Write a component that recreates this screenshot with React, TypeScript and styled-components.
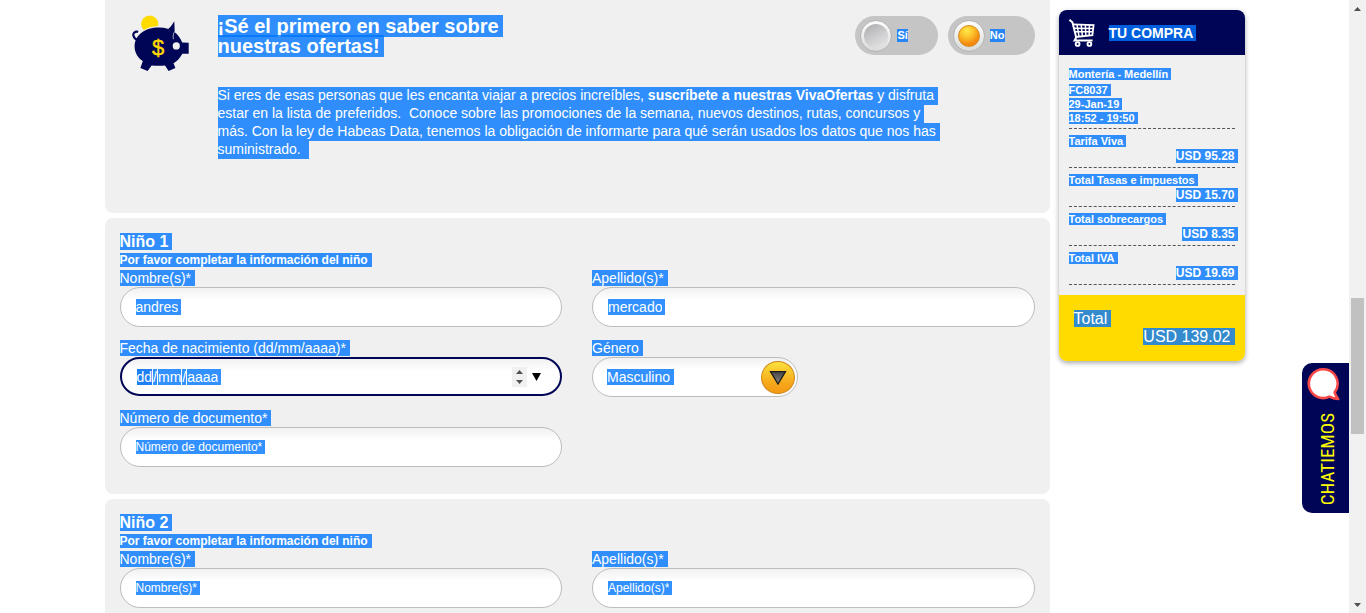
import React from "react";
import styled, { createGlobalStyle, css } from "styled-components";

const navy = "#000555";
const yellow = "#ffdb00";
const mark = "rgba(0, 118, 255, 0.8)";

const GlobalStyle = createGlobalStyle`
  *, *::before, *::after { box-sizing: border-box; }
  body {
    margin: 0;
    background: #fff;
    font-family: "Liberation Sans", Arial, sans-serif;
    font-size: 14px;
    color: #fff;
  }
  h1, h2, p { margin: 0; }
  input, select, button { font-family: inherit; margin: 0; padding: 0; border: 0; border-radius: 0; outline: 0; }
`;

const Shell = styled.div`
  display: flex;
  height: 100vh;
  overflow: hidden;
`;

const Viewport = styled.div`
  position: relative;
  flex: 1;
  min-width: 0;
`;

const Container = styled.div`
  display: grid;
  grid-template-columns: minmax(0, 1fr) 186px;
  align-items: start;
  gap: 9px;
  width: 100%;
  max-width: 1140px;
  margin: 0 auto;
`;

const Column = styled.main`
  display: flex;
  flex-direction: column;
  gap: 5px;
`;

const Card = styled.section`
  display: flex;
  flex-direction: column;
  align-items: stretch;
  padding: 15px 15px 27px;
  border-radius: 8px;
  background: #f0f0f0;
`;

/* Newsletter */

const OfferCard = styled.section`
  display: grid;
  grid-template-columns: 86px minmax(0, 1fr);
  padding: 15px 15px 55px 27px;
  border-radius: 0 0 8px 8px;
  background: #f0f0f0;
`;

const OfferHead = styled.div`
  display: flex;
  justify-content: space-between;
  align-items: flex-start;
  padding-top: 1px;
  margin-bottom: 30px;
`;

const OfferTitle = styled.h1`
  max-width: 320px;
  font-size: 20px;
  line-height: 20px;
`;

const OfferText = styled.p`
  max-width: 728px;
  font-size: 14px;
  line-height: 18px;
`;

const Marked = styled.span<{ $fill?: boolean }>`
  padding: 0 4px ${(p) => (p.$fill ? "2px" : "0")} 0;
  background: ${mark};
  -webkit-box-decoration-break: clone;
  box-decoration-break: clone;
`;

const Options = styled.div`
  display: flex;
  gap: 10px;
`;

const Option = styled.label`
  display: flex;
  align-items: center;
  gap: 5px;
  height: 39px;
  padding: 0 30px 0 5px;
  border-radius: 20px;
  background: #c5c5c5;
  font-size: 11px;
  font-weight: bold;
  line-height: 13px;
`;

const Radio = styled.input`
  appearance: none;
  display: grid;
  place-items: center;
  width: 32px;
  height: 32px;
  border: 1px solid #b4b4b4;
  border-radius: 50%;
  background: linear-gradient(#fdfdfd, #d9dbdb);
  &::before {
    content: "";
    width: 24px;
    height: 24px;
    border-radius: 50%;
    background: linear-gradient(150deg, #b2b2b4 10%, #cfcfd1 55%, #e8e8e8);
  }
  &:checked::before {
    width: 22px;
    height: 22px;
    border: 1px solid #d98a1c;
    background: radial-gradient(circle at 40% 25%, #ffe94a 0, #fbc02a 35%, #f58a10 68%, #f07c0c 100%);
  }
`;

const OptionText = styled.span`
  background: ${mark};
`;

/* Passenger form */

const line = css`
  align-self: flex-start;
  padding-right: 4px;
  background: ${mark};
`;

const CardTitle = styled.h2`
  ${line}
  margin-bottom: 3px;
  font-size: 16px;
  line-height: 17px;
`;

const CardNote = styled.p`
  ${line}
  margin-bottom: 3px;
  font-size: 12px;
  font-weight: bold;
  line-height: 14px;
`;

const Fields = styled.div`
  display: grid;
  grid-template-columns: 1fr 1fr;
  gap: 13px 30px;
`;

const Field = styled.div`
  display: flex;
  flex-direction: column;
  gap: 1px;
`;

const Label = styled.label`
  ${line}
  line-height: 16px;
`;

const Box = styled.div<{ $active?: boolean; $compact?: boolean }>`
  display: flex;
  align-items: center;
  width: ${(p) => (p.$compact ? "206px" : "auto")};
  height: ${(p) => (p.$active ? "39px" : "40px")};
  padding: ${(p) => (p.$compact ? "0 2px 0 14px" : p.$active ? "0 19px 0 15px" : "0 15px")};
  border: ${(p) => (p.$active ? `2px solid ${navy}` : "1px solid #bdbdbd")};
  border-radius: 20px;
  background: linear-gradient(#f1f1f1, #fff 12px);
`;

const markedControl = css`
  appearance: none;
  field-sizing: content;
  flex: none;
  color: #fff;
  background: ${mark};
`;

const TextInput = styled.input`
  ${markedControl}
  height: 16px;
  padding-right: 3px;
  font-size: 14px;
  line-height: 16px;
  &::placeholder {
    color: #fff;
    opacity: 1;
  }
  &:placeholder-shown {
    height: 14px;
    font-size: 12px;
    line-height: 14px;
  }
`;

const DateParts = styled.div`
  display: flex;
  flex: 1;
  gap: 1px;
  line-height: 16px;
`;

const DatePart = styled.input<{ $current?: boolean; $last?: boolean }>`
  ${markedControl}
  height: 16px;
  padding-right: ${(p) => (p.$last ? "3px" : "0")};
  background: ${(p) => (p.$current ? "#1f80f5" : mark)};
  font-size: 14px;
`;

const Slash = styled.span`
  background: ${mark};
`;

const Spinner = styled.div`
  display: grid;
  margin-right: 5px;
  background: #f0f0f0;
`;

const StepButton = styled.button`
  display: grid;
  place-items: center;
  width: 15px;
  height: 10px;
  background: none;
  color: #505050;
`;

const CalendarButton = styled.button`
  display: grid;
  width: 9px;
  height: 8px;
  background: none;
  color: #000;
`;

const Select = styled.select`
  ${markedControl}
  height: 16px;
  padding-right: 4px;
  font-size: 14px;
  line-height: 16px;
`;

const DropButton = styled.button`
  display: grid;
  place-items: center;
  width: 34px;
  height: 33px;
  margin-left: auto;
  border: 1px solid #cf8417;
  border-radius: 50%;
  background: linear-gradient(#fbe23c, #f6a51a 70%, #f39a14);
`;

/* Purchase summary */

const Summary = styled.aside`
  margin-top: 10px;
  border-radius: 8px;
  overflow: hidden;
  background: #f0f0f0;
  box-shadow: 0 2px 5px rgba(0, 0, 0, 0.35);
`;

const SummaryHead = styled.header`
  display: flex;
  align-items: center;
  gap: 14px;
  height: 45px;
  padding: 0 10px;
  background: ${navy};
`;

const SummaryTitle = styled.h2`
  padding-right: 3px;
  background: ${mark};
  font-size: 14px;
  line-height: 16px;
`;

const SummaryBody = styled.div`
  padding: 13px 10px 4px;
  font-size: 11px;
  font-weight: bold;
  line-height: 12px;
`;

const Block = styled.div`
  display: flex;
  flex-direction: column;
  gap: 2px;
  padding-bottom: 4px;
  margin-bottom: 6px;
  border-bottom: 1px dashed #555;
`;

const Item = styled.span<{ $lead?: boolean }>`
  ${line}
  padding-right: 3px;
  margin-bottom: ${(p) => (p.$lead ? "2px" : "0")};
`;

const Amount = styled.span`
  align-self: flex-end;
  margin-right: -3px;
  padding-right: 3px;
  background: ${mark};
  font-size: 12px;
  line-height: 14px;
`;

const Total = styled.footer`
  display: flex;
  flex-direction: column;
  gap: 1px;
  padding: 15px 10px 16px 15px;
  background: ${yellow};
  font-size: 16px;
  line-height: 17px;
`;

const TotalText = styled.span<{ $end?: boolean }>`
  align-self: ${(p) => (p.$end ? "flex-end" : "flex-start")};
  padding-right: 4px;
  background: ${mark};
`;

/* Chat tab and scroll bar */

const ChatTab = styled.button`
  position: absolute;
  top: 363px;
  right: 0;
  display: flex;
  flex-direction: column;
  align-items: center;
  justify-content: space-between;
  width: 47px;
  height: 150px;
  padding: 4px 0 8px 5px;
  border-radius: 10px 0 0 10px;
  background: ${navy};
  & > svg {
    align-self: flex-start;
  }
`;

const ChatText = styled.span`
  writing-mode: vertical-rl;
  rotate: 180deg;
  color: #ff0;
  font-family: "Roboto Condensed", "Liberation Sans Narrow", "Liberation Sans", sans-serif;
  font-size: 19px;
  line-height: 26px;
`;

const ScrollBar = styled.div`
  display: flex;
  flex-direction: column;
  flex: none;
  width: 17px;
  padding: 0 2px;
  background: #f1f1f1;
  color: #505050;
`;

const ScrollEnd = styled.div`
  display: grid;
  place-items: center;
  height: 17px;
`;

const Track = styled.div<{ $part: number; $thumb?: boolean }>`
  flex: ${(p) => p.$part};
  background: ${(p) => (p.$thumb ? "#c1c1c1" : "none")};
`;

function Triangle({ up, width, height }: { up?: boolean; width: number; height: number }) {
  const d = up ? `M0 ${height}H${width}L${width / 2} 0Z` : `M0 0H${width}L${width / 2} ${height}Z`;
  return (
    <svg width={width} height={height} aria-hidden="true">
      <path d={d} fill="currentColor" />
    </svg>
  );
}

function PiggyBank() {
  return (
    <svg width="57" height="56" viewBox="0 0 57 56" aria-hidden="true">
      <circle cx="17.7" cy="9" r="8.6" fill={yellow} />
      <ellipse cx="27" cy="31.4" rx="25.6" ry="20.4" fill="#f0f0f0" />
      <g fill={navy}>
        <path d="M27 12.4C40 12.4 47 19 50.2 27.6L56.7 27.8V38.8H50.4C47.6 43.6 44.6 46.6 41.5 48.2L43.4 53L36.6 56L33 50.4C29 51 24 51 19.6 50.4L15.6 56L8.4 53L10.8 46C5.6 42.4 2.6 37.4 2.6 31.4C2.6 20 13 12.4 27 12.4Z" />
        <path d="M34 15.5C37.6 13.4 39.8 10.8 42.2 6.2C42.8 11 42.2 14.6 43.2 20.5Z" />
      </g>
      <path d="M42.5 16.5C41.2 19 40.8 21.6 41.4 24.2" fill="none" stroke="#f0f0f0" strokeWidth="0.7" />
      <path d="M6.2 16.8C2.6 16 0.6 18.4 1.6 21.2C2.4 23.6 4.2 24.8 6.4 24.4" fill="none" stroke={navy} strokeWidth="2.2" />
      <circle cx="44.3" cy="30.9" r="3.6" fill="#f0f0f0" />
      <text
        x="26"
        y="40"
        textAnchor="middle"
        fontFamily="Liberation Sans, sans-serif"
        fontSize="22"
        fill={yellow}
        stroke={yellow}
        strokeWidth="0.4"
      >
        $
      </text>
    </svg>
  );
}

function Cart() {
  return (
    <svg width="26" height="28" viewBox="0 0 26 28" fill="none" stroke="#fff" aria-hidden="true">
      <path d="M0.4 0.8L3.4 3.2L7 17.6C7.2 19 6.6 20 5.6 21.6H23.6" strokeWidth="2" />
      <path d="M3.6 5.4L24.6 6.2L23.4 16.2L6.8 18" strokeWidth="1.8" />
      <path d="M4.8 9.2L24.2 9.6M5.8 12.8L23.8 12.8" strokeWidth="1.5" />
      <path d="M8 5.6L10 17.4M12.2 5.8L13.4 17M16.4 6L16.8 16.8M20.4 6.2L20.2 16.4" strokeWidth="1.5" />
      <circle cx="8.6" cy="25" r="1.9" strokeWidth="1.9" />
      <circle cx="20.4" cy="25" r="1.9" strokeWidth="1.9" />
    </svg>
  );
}

function Bubble() {
  return (
    <svg width="34" height="34" viewBox="0 0 34 34" aria-hidden="true">
      <path
        d="M16.3 2.2A14.4 14.4 0 1 0 22.4 29.6C25 31 27.8 31.8 31.2 32C29.2 29.6 28 27 27.6 25.4A14.4 14.4 0 0 0 16.3 2.2Z"
        fill="#fff"
        stroke="#f94848"
        strokeWidth="2.6"
        strokeLinejoin="round"
      />
    </svg>
  );
}

function DropArrow() {
  return (
    <svg width="18" height="15" viewBox="0 0 18 15" aria-hidden="true">
      <defs>
        <linearGradient id="drop" x1="0" y1="0" x2="0" y2="1">
          <stop offset="0" stopColor="#444" />
          <stop offset="1" stopColor="#8a8a8a" />
        </linearGradient>
      </defs>
      <path d="M1.5 1.6H16.5L9 14Z" fill="url(#drop)" stroke="#1c1c1c" strokeWidth="1.3" />
    </svg>
  );
}

type TextFieldProps = { id: string; label: string; value?: string };

function TextField({ id, label, value }: TextFieldProps) {
  return (
    <Field>
      <Label htmlFor={id}>{label}</Label>
      <Box>
        <TextInput id={id} type="text" defaultValue={value} placeholder={label} />
      </Box>
    </Field>
  );
}

function BirthDateField() {
  return (
    <Field>
      <Label htmlFor="birth-day">Fecha de nacimiento (dd/mm/aaaa)*</Label>
      <Box $active>
        <DateParts>
          <DatePart id="birth-day" defaultValue="dd" $current />
          <Slash>/</Slash>
          <DatePart aria-label="Mes" defaultValue="mm" />
          <Slash>/</Slash>
          <DatePart aria-label="Año" defaultValue="aaaa" $last />
        </DateParts>
        <Spinner>
          <StepButton type="button" aria-label="Aumentar">
            <Triangle up width={7} height={4} />
          </StepButton>
          <StepButton type="button" aria-label="Disminuir">
            <Triangle width={7} height={4} />
          </StepButton>
        </Spinner>
        <CalendarButton type="button" aria-label="Abrir calendario">
          <Triangle width={9} height={8} />
        </CalendarButton>
      </Box>
    </Field>
  );
}

function GenderField() {
  return (
    <Field>
      <Label htmlFor="gender">Género</Label>
      <Box $compact>
        <Select id="gender" defaultValue="m">
          <option value="m">Masculino</option>
        </Select>
        <DropButton type="button" aria-label="Abrir lista">
          <DropArrow />
        </DropButton>
      </Box>
    </Field>
  );
}

function ChildCard({ title, children }: { title: string; children: React.ReactNode }) {
  return (
    <Card>
      <CardTitle>{title}</CardTitle>
      <CardNote>Por favor completar la información del niño</CardNote>
      <Fields>{children}</Fields>
    </Card>
  );
}

const charges = [
  ["Tarifa Viva", "USD 95.28"],
  ["Total Tasas e impuestos", "USD 15.70"],
  ["Total sobrecargos", "USD 8.35"],
  ["Total IVA", "USD 19.69"],
];

export default function App() {
  return (
    <Shell>
      <GlobalStyle />
      <Viewport>
        <Container>
          <Column>
            <OfferCard>
              <PiggyBank />
              <div>
                <OfferHead>
                  <OfferTitle>
                    <Marked>¡Sé el primero en saber sobre nuestras ofertas!</Marked>
                  </OfferTitle>
                  <Options>
                    <Option>
                      <Radio type="radio" name="offers" />
                      <OptionText>Sí</OptionText>
                    </Option>
                    <Option>
                      <Radio type="radio" name="offers" defaultChecked />
                      <OptionText>No</OptionText>
                    </Option>
                  </Options>
                </OfferHead>
                <OfferText>
                  <Marked $fill>
                    Si eres de esas personas que les encanta viajar a precios increíbles,{" "}
                    <b>suscríbete a nuestras VivaOfertas</b> y disfruta estar en la lista de preferidos.&nbsp; Conoce
                    sobre las promociones de la semana, nuevos destinos, rutas, concursos y más. Con la ley de Habeas
                    Data, tenemos la obligación de informarte para qué serán usados los datos que nos has
                    suministrado.&nbsp;
                  </Marked>
                </OfferText>
              </div>
            </OfferCard>

            <ChildCard title="Niño 1">
              <TextField id="name-1" label="Nombre(s)*" value="andres" />
              <TextField id="surname-1" label="Apellido(s)*" value="mercado" />
              <BirthDateField />
              <GenderField />
              <TextField id="document-1" label="Número de documento*" />
            </ChildCard>

            <ChildCard title="Niño 2">
              <TextField id="name-2" label="Nombre(s)*" />
              <TextField id="surname-2" label="Apellido(s)*" />
            </ChildCard>
          </Column>

          <Summary>
            <SummaryHead>
              <Cart />
              <SummaryTitle>TU COMPRA</SummaryTitle>
            </SummaryHead>
            <SummaryBody>
              <Block>
                <Item $lead>Montería - Medellín</Item>
                <Item>FC8037</Item>
                <Item>29-Jan-19</Item>
                <Item>18:52 - 19:50</Item>
              </Block>
              {charges.map(([name, amount]) => (
                <Block key={name}>
                  <Item>{name}</Item>
                  <Amount>{amount}</Amount>
                </Block>
              ))}
            </SummaryBody>
            <Total>
              <TotalText>Total</TotalText>
              <TotalText $end>USD 139.02</TotalText>
            </Total>
          </Summary>
        </Container>

        <ChatTab type="button">
          <Bubble />
          <ChatText>CHATIEMOS</ChatText>
        </ChatTab>
      </Viewport>

      <ScrollBar aria-hidden="true">
        <ScrollEnd>
          <Triangle up width={7} height={4} />
        </ScrollEnd>
        <Track $part={281} />
        <Track $part={136} $thumb />
        <Track $part={162} />
        <ScrollEnd>
          <Triangle width={7} height={4} />
        </ScrollEnd>
      </ScrollBar>
    </Shell>
  );
}
